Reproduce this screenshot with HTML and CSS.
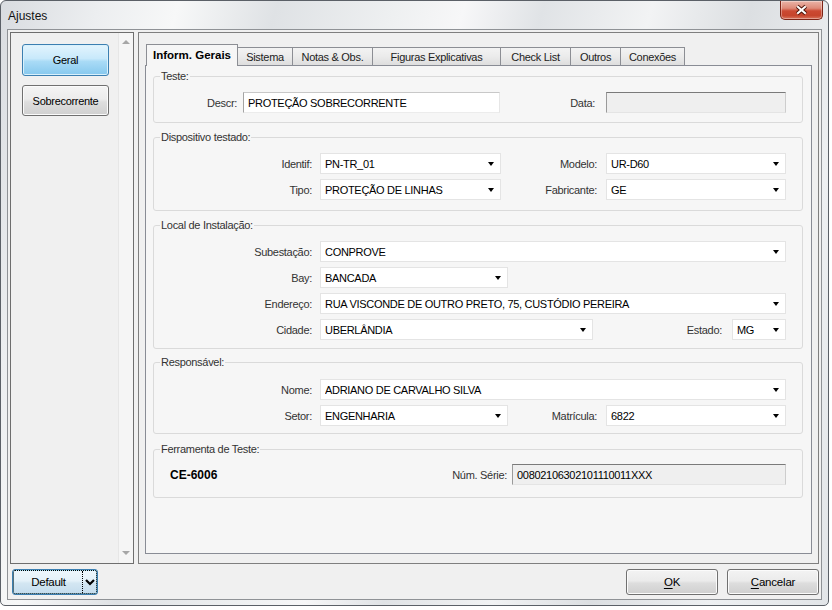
FILE: index.html
```html
<!DOCTYPE html>
<html lang="pt">
<head>
<meta charset="utf-8">
<title>Ajustes</title>
<link rel="stylesheet" href="styles.css">
</head>
<body>
<div class="window">
  <div class="titlebar">
    <span class="title">Ajustes</span>
    <div class="close">
      <svg width="43" height="19" viewBox="0 0 43 19">
        <path d="M17 5 L26 13 M26 5 L17 13" stroke="#4b1309" stroke-width="4.2" fill="none"/>
        <path d="M17 5 L26 13 M26 5 L17 13" stroke="#ffffff" stroke-width="2.2" fill="none"/>
      </svg>
    </div>
  </div>
  <div class="client">
    <div class="panels">
      <div class="side">
        <div class="side-list">
          <button class="navbtn navbtn-active">Geral</button>
          <button class="navbtn navbtn-2">Sobrecorrente</button>
        </div>
        <div class="vscroll">
          <span class="arr-up"></span>
          <span class="arr-down"></span>
        </div>
      </div>
      <div class="main">
        <div class="tabs">
          <div class="tab tab-active w-t1">Inform. Gerais</div>
          <div class="tab w-t2">Sistema</div>
          <div class="tab w-t3">Notas &amp; Obs.</div>
          <div class="tab w-t4">Figuras Explicativas</div>
          <div class="tab w-t5">Check List</div>
          <div class="tab w-t6">Outros</div>
          <div class="tab w-t7">Conexões</div>
        </div>
        <div class="page">
          <fieldset class="group g-teste">
            <legend>Teste:</legend>
            <div class="rows">
              <div class="row">
                <span class="lbl w-descr">Descr:</span>
                <div class="field edit w-descr-in">PROTEÇÃO SOBRECORRENTE</div>
                <span class="lbl w-data">Data:</span>
                <div class="field disabled w-data-in"></div>
              </div>
            </div>
          </fieldset>

          <fieldset class="group g-disp">
            <legend>Dispositivo testado:</legend>
            <div class="rows">
              <div class="row">
                <span class="lbl w-main">Identif:</span>
                <div class="field combo w-half"><span class="val">PN-TR_01</span><span class="caret"></span></div>
                <span class="lbl w-mid">Modelo:</span>
                <div class="field combo w-right"><span class="val">UR-D60</span><span class="caret"></span></div>
              </div>
              <div class="row">
                <span class="lbl w-main">Tipo:</span>
                <div class="field combo w-half"><span class="val">PROTEÇÃO DE LINHAS</span><span class="caret"></span></div>
                <span class="lbl w-mid">Fabricante:</span>
                <div class="field combo w-right"><span class="val">GE</span><span class="caret"></span></div>
              </div>
            </div>
          </fieldset>

          <fieldset class="group g-local">
            <legend>Local de Instalação:</legend>
            <div class="rows">
              <div class="row">
                <span class="lbl w-main">Subestação:</span>
                <div class="field combo w-full"><span class="val">CONPROVE</span><span class="caret"></span></div>
              </div>
              <div class="row">
                <span class="lbl w-main">Bay:</span>
                <div class="field combo w-bay"><span class="val">BANCADA</span><span class="caret"></span></div>
              </div>
              <div class="row">
                <span class="lbl w-main">Endereço:</span>
                <div class="field combo w-full"><span class="val">RUA VISCONDE DE OUTRO PRETO, 75, CUSTÓDIO PEREIRA</span><span class="caret"></span></div>
              </div>
              <div class="row">
                <span class="lbl w-main">Cidade:</span>
                <div class="field combo w-city"><span class="val">UBERLÂNDIA</span><span class="caret"></span></div>
                <span class="lbl w-estado">Estado:</span>
                <div class="field combo w-uf"><span class="val">MG</span><span class="caret"></span></div>
              </div>
            </div>
          </fieldset>

          <fieldset class="group g-resp">
            <legend>Responsável:</legend>
            <div class="rows">
              <div class="row">
                <span class="lbl w-main">Nome:</span>
                <div class="field combo w-full"><span class="val">ADRIANO DE CARVALHO SILVA</span><span class="caret"></span></div>
              </div>
              <div class="row">
                <span class="lbl w-main">Setor:</span>
                <div class="field combo w-bay"><span class="val">ENGENHARIA</span><span class="caret"></span></div>
                <span class="lbl w-matr">Matrícula:</span>
                <div class="field combo w-right"><span class="val">6822</span><span class="caret"></span></div>
              </div>
            </div>
          </fieldset>

          <fieldset class="group g-tool">
            <legend>Ferramenta de Teste:</legend>
            <div class="rows">
              <div class="row">
                <span class="tool-name">CE-6006</span>
                <span class="lbl w-serie">Núm. Série:</span>
                <div class="field disabled w-serie-in">00802106302101110011XXX</div>
              </div>
            </div>
          </fieldset>
        </div>
      </div>
    </div>
    <div class="footer">
      <div class="split">
        <span class="split-main">Default</span>
        <span class="split-arrow">
          <svg width="10" height="7" viewBox="0 0 10 7"><path d="M1 1 L5 5 L9 1" stroke="#000" stroke-width="2.2" fill="none"/></svg>
        </span>
      </div>
      <div class="spacer"></div>
      <button class="btn"><u>O</u>K</button>
      <button class="btn"><u>C</u>ancelar</button>
    </div>
  </div>
</div>
</body>
</html>
```
FILE: styles.css
```css
* { box-sizing: border-box; }

body {
  margin: 0;
  background: #ffffff;
  font-family: "Liberation Sans", Arial, sans-serif;
  font-size: 11px;
  letter-spacing: -0.3px;
  color: #000;
}

.window {
  width: 829px;
  height: 606px;
  border: 1px solid #5b6067;
  border-radius: 6px 6px 5px 5px;
  overflow: hidden;
  display: flex;
  flex-direction: column;
  background: linear-gradient(105deg, #d9dce0 0%, #eceef0 10%, #f7f8f8 18%, #dfe2e5 28%, #eef0f1 40%, #f7f7f8 47%, #e0e3e6 55%, #f2f3f4 66%, #dcdfe2 76%, #eef0f2 88%, #e2e5e8 100%);
}

.titlebar {
  flex: none;
  height: 28px;
  display: flex;
  justify-content: space-between;
  align-items: flex-start;
}

.title {
  font-size: 12px;
  letter-spacing: 0;
  line-height: 14px;
  padding: 8px 0 0 7px;
  color: #111;
}

.close {
  width: 43px;
  height: 19px;
  margin-right: 5px;
  border: 1px solid #7d2416;
  border-top: none;
  border-radius: 0 0 5px 5px;
  background: linear-gradient(#eab4a8 0%, #de8a78 40%, #cc4a33 55%, #c6442c 80%, #d8735c 100%);
  box-shadow: inset 0 0 0 1px rgba(255,255,255,0.35);
  display: flex;
}
.close svg { display: block; }

.client {
  flex: 1;
  margin: 0 6px 5px 6px;
  border: 1px solid #8f9296;
  background: #f0f0f0;
  padding: 2px;
  display: flex;
  flex-direction: column;
}

.panels {
  flex: none;
  height: 532px;
  display: flex;
  gap: 4px;
}

/* left navigation panel */
.side {
  width: 124px;
  border: 1px solid #6e6e6e;
  display: flex;
  background: #f0f0f0;
}
.side-list {
  flex: 1;
  padding: 11px 0 0 11px;
  display: flex;
  flex-direction: column;
  align-items: flex-start;
  gap: 9px;
}
.navbtn {
  font: inherit;
  letter-spacing: -0.3px;
  width: 87px;
  height: 31px;
  padding: 0;
  color: #000;
  border: 1px solid #707070;
  border-radius: 3px;
  background: linear-gradient(#f4f4f4 0%, #ececec 45%, #dedede 55%, #d0d0d0 100%);
  box-shadow: inset 0 0 0 1px #fbfbfb;
}
.navbtn-active {
  height: 32px;
  border-color: #3c7fb1;
  background: linear-gradient(#e3f4fd 0%, #c8e9fb 45%, #a9dbf6 55%, #86c8ee 100%);
  box-shadow: inset 0 0 0 1px #d9f1fc;
}
.vscroll {
  width: 15px;
  background: #f5f5f5;
  border-left: 1px solid #e6e6e6;
  display: flex;
  flex-direction: column;
  align-items: center;
  justify-content: space-between;
  padding: 7px 0 8px;
}
.arr-up {
  width: 0; height: 0;
  border-left: 4px solid transparent;
  border-right: 4px solid transparent;
  border-bottom: 4px solid #a6a6a6;
}
.arr-down {
  width: 0; height: 0;
  border-left: 4px solid transparent;
  border-right: 4px solid transparent;
  border-top: 4px solid #a6a6a6;
}

/* right panel */
.main {
  flex: 1;
  border: 1px solid #7f7f7f;
  padding: 11px 6px 9px 6px;
  display: flex;
  flex-direction: column;
}

.tabs {
  flex: none;
  height: 21px;
  display: flex;
  align-items: flex-end;
  padding-left: 1px;
  position: relative;
  z-index: 1;
}
.tab {
  height: 18px;
  margin-left: -1px;
  border: 1px solid #8c8e94;
  border-bottom: none;
  background: linear-gradient(#f3f3f3 0%, #ebebeb 50%, #dedede 100%);
  color: #222;
  display: flex;
  align-items: center;
  justify-content: center;
  padding-top: 1px;
  white-space: nowrap;
}
.tab-active {
  height: 22px;
  margin-left: 0;
  margin-bottom: -1px;
  background: #f6f6f6;
  font-weight: bold;
  font-size: 11.5px;
  letter-spacing: 0;
  color: #000;
  padding-top: 0;
  padding-bottom: 1px;
}
.w-t1 { width: 92px; }
.w-t2 { width: 56px; }
.w-t3 { width: 81px; }
.w-t4 { width: 129px; }
.w-t5 { width: 71px; }
.w-t6 { width: 51px; }
.w-t7 { width: 65px; }

.page {
  flex: 1;
  border: 1px solid #898c95;
  background: #f6f6f6;
  padding: 4px 8px 0 7px;
}

.group {
  margin: 8px 0 0 0;
  border: 1px solid #dadada;
  border-radius: 3px;
  padding: 10px 0 9px 0;
  min-width: 0;
}
.group legend {
  margin-left: 6px;
  padding: 0 1px;
  line-height: 13px;
  color: #333;
}
.g-teste { margin-top: 0; padding-top: 9px; padding-bottom: 9px; }
.g-disp { padding-top: 9px; padding-bottom: 10px; }
.g-local { padding-top: 9px; padding-bottom: 8px; }
.g-resp { margin-top: 7px; padding-top: 10px; padding-bottom: 7px; }
.g-tool { margin-top: 9px; padding-top: 8px; padding-bottom: 12px; }

.rows {
  display: flex;
  flex-direction: column;
  gap: 5px;
}
.row {
  display: flex;
  align-items: center;
  height: 21px;
}
.lbl {
  flex: none;
  text-align: right;
  color: #333;
  white-space: nowrap;
}
.field {
  flex: none;
  height: 21px;
  display: flex;
  align-items: center;
  padding-left: 4px;
  white-space: nowrap;
  overflow: hidden;
  color: #000;
}
.edit {
  background: #fff;
  border: 1px solid;
  border-color: #c8c8c8 #e6e6e6 #ececec #a4a4a4;
}
.disabled {
  background: #efefef;
  border: 1px solid;
  border-color: #7a7a7a #cdcdcd #e4e4e4 #9a9a9a;
}
.combo {
  background: #fff;
  border: 1px solid #e4e4e4;
  padding-right: 6px;
}
.combo .val { flex: 1; overflow: hidden; }
.caret {
  flex: none;
  width: 0; height: 0;
  border-left: 3.5px solid transparent;
  border-right: 3.5px solid transparent;
  border-top: 4px solid #000;
  margin-top: 1px;
}

/* widths (label ends, control starts) */
.w-descr { width: 83px; margin-right: 6px; }
.w-descr-in { width: 257px; }
.w-data { width: 95px; margin-right: 11px; }
.w-data-in { width: 180px; }

.w-main { width: 158px; margin-right: 8px; }
.w-half { width: 181px; }
.w-mid { width: 96px; margin-right: 9px; }
.w-right { width: 180px; }
.w-full { width: 466px; }
.w-bay { width: 188px; }
.w-city { width: 273px; }
.w-estado { width: 129px; margin-right: 10px; }
.w-uf { width: 54px; }
.w-matr { width: 89px; margin-right: 9px; }

.tool-name {
  flex: none;
  width: 120px;
  padding-left: 16px;
  font-weight: bold;
  font-size: 12px;
  letter-spacing: 0;
  color: #000;
}
.w-serie { width: 233px; margin-right: 5px; }
.w-serie-in { width: 274px; }

/* footer */
.footer {
  flex: 1;
  display: flex;
  align-items: flex-start;
  padding: 5px 0 0 2px;
}
.spacer { flex: 1; }
.split {
  width: 86px;
  height: 26px;
  border: 1px solid #3c7fb1;
  border-radius: 3px;
  background: linear-gradient(#eef7fc 0%, #e4f1f9 45%, #d3e6f2 55%, #c4dced 100%);
  box-shadow: inset 0 0 0 1px #a8e2f8;
  outline: 1px dotted #000;
  outline-offset: -2px;
  display: flex;
}
.split-main {
  flex: 1;
  display: flex;
  align-items: center;
  justify-content: center;
  padding-left: 2px;
  font-size: 11.5px;
}
.split-arrow {
  width: 15px;
  border-left: 1px dotted #000;
  margin: 1px 0;
  display: flex;
  align-items: center;
  justify-content: center;
}
.split-arrow svg { display: block; }
.btn {
  font: inherit;
  font-size: 11.5px;
  letter-spacing: -0.2px;
  width: 92px;
  height: 26px;
  padding: 0;
  margin-left: 9px;
  color: #000;
  border: 1px solid #707070;
  border-radius: 3px;
  background: linear-gradient(#f3f3f3 0%, #ebebeb 45%, #dddddd 55%, #cfcfcf 100%);
  box-shadow: inset 0 0 0 1px #fbfbfb;
}
.btn u { text-decoration: underline; text-underline-offset: 2px; }
```
